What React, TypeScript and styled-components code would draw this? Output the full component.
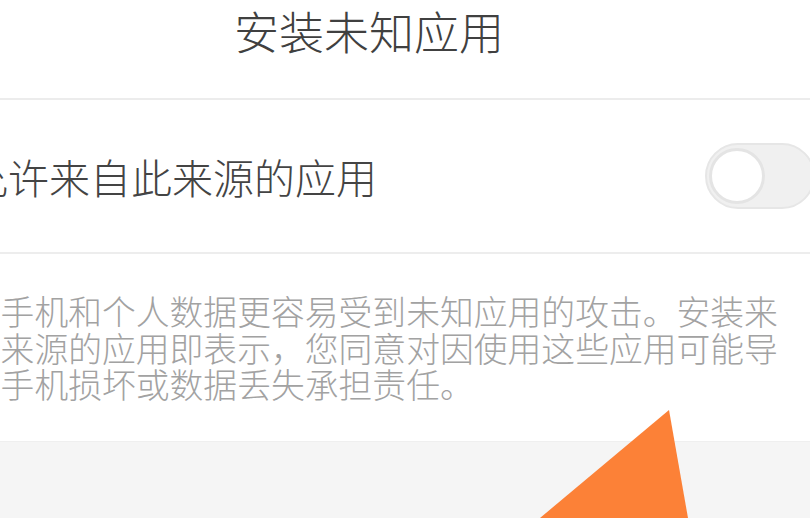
import styled, { createGlobalStyle } from 'styled-components';

const GlobalStyle = createGlobalStyle`
  html, body {
    margin: 0;
    padding: 0;
    width: 810px;
    height: 518px;
    overflow: hidden;
    background: #ffffff;
  }
  body {
    font-family: "Noto Sans CJK SC", "Noto Sans", sans-serif;
  }
`;

const Viewport = styled.div`
  position: relative;
  width: 810px;
  height: 518px;
  overflow: hidden;
  background: #ffffff;
`;

const Screen = styled.div`
  display: flex;
  flex-direction: column;
  width: 900px;
  height: 518px;
  margin-left: -81px;
`;

const Header = styled.header`
  height: 100px;
  box-sizing: border-box;
  padding-top: 4px;
  display: flex;
  justify-content: center;
  align-items: flex-start;
  border-bottom: 2px solid #ececec;
`;

const Title = styled.h1`
  margin: 0;
  font-size: 45px;
  line-height: 54px;
  font-weight: 300;
  color: #404040;
`;

const Row = styled.div`
  height: 154px;
  box-sizing: border-box;
  display: flex;
  align-items: center;
  justify-content: space-between;
  padding: 0 4px 0 48px;
  border-bottom: 2px solid #ededed;
`;

const RowLabel = styled.span`
  font-size: 41px;
  line-height: 50px;
  font-weight: 300;
  color: #444444;
`;

const Track = styled.div<{ $on: boolean }>`
  width: 110px;
  height: 66px;
  box-sizing: border-box;
  border-radius: 33px;
  border: 2px solid #e6e6e6;
  background: ${(p) => (p.$on ? '#3c8cf0' : '#f0f0f0')};
  display: flex;
  align-items: center;
  padding: 0 2px;
  justify-content: ${(p) => (p.$on ? 'flex-end' : 'flex-start')};
`;

const Knob = styled.div`
  width: 56px;
  height: 56px;
  box-sizing: border-box;
  border-radius: 50%;
  background: #ffffff;
  border: 3px solid #e4e4e4;
`;

const Notice = styled.p`
  margin: 0;
  height: 187px;
  box-sizing: border-box;
  padding: 39px 14px 0 14px;
  font-size: 33.8px;
  line-height: 36.5px;
  font-weight: 300;
  color: #a2a2a2;
`;

const Footer = styled.div`
  flex: 1;
  background: #f5f5f5;
  border-top: 1px solid #efefef;
`;

const Pointer = styled.svg`
  position: absolute;
  left: 0;
  top: 0;
  pointer-events: none;
`;

export default function App() {
  return (
    <>
      <GlobalStyle />
      <Viewport>
        <Screen>
          <Header>
            <Title>安装未知应用</Title>
          </Header>
          <Row>
            <RowLabel>允许来自此来源的应用</RowLabel>
            <Track $on={false}>
              <Knob />
            </Track>
          </Row>
          <Notice>
            您的手机和个人数据更容易受到未知应用的攻击。安装来自此来源的应用即表示，您同意对因使用这些应用可能导致的手机损坏或数据丢失承担责任。
          </Notice>
          <Footer />
        </Screen>
        <Pointer width="810" height="518" viewBox="0 0 810 518">
          <polygon points="669,410 540,518 688,518" fill="#fc8137" />
        </Pointer>
      </Viewport>
    </>
  );
}
